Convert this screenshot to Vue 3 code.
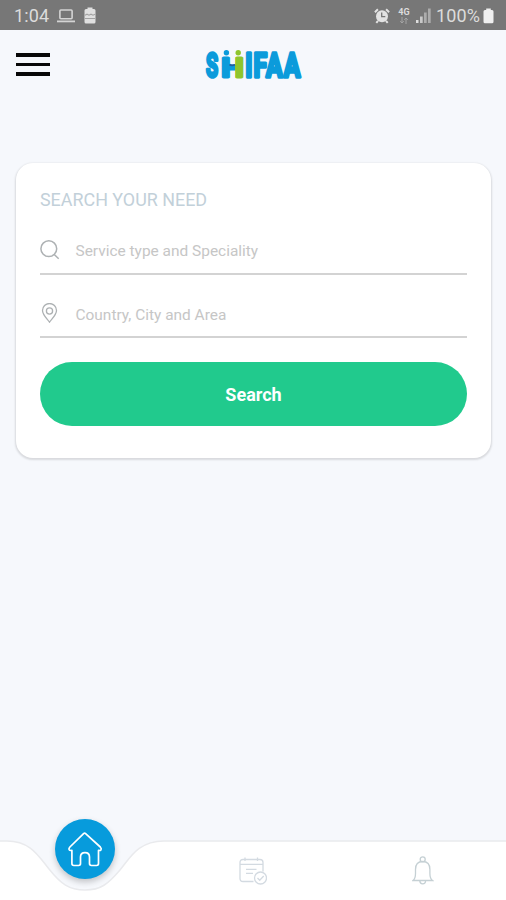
<script setup>
const fields = [
  { icon: 'search', placeholder: 'Service type and Speciality' },
  { icon: 'pin', placeholder: 'Country, City and Area' },
]
</script>

<template>
  <div class="screen">
    <div class="status">
      <span class="time">1:04</span>
      <svg class="laptop" width="18" height="14" viewBox="0 0 18 14">
        <rect x="2.9" y="1" width="12.2" height="8.8" rx="1" fill="none" stroke="#d4d4d4" stroke-width="1.6" />
        <path d="M0 12.4h18" stroke="#d4d4d4" stroke-width="1.8" />
      </svg>
      <svg class="saver" width="12" height="17" viewBox="0 0 12 17">
        <path d="M3.5 2V.5h5V2H10q1.5 0 1.5 1.500V15q0 1.500-1.500 1.500H2Q.5 16.500.5 15V3.500Q.5 2 2 2z" fill="#e0e0e0" />
        <path d="M1 8.200l2-1 2 1 2-1 2 1 2-1M1 11.500h10" fill="none" stroke="#a2a2a2" stroke-width="1.100" />
      </svg>
      <span class="spacer"></span>
      <svg class="alarm" width="16" height="16" viewBox="0 0 16 16">
        <circle cx="8" cy="8.300" r="6" fill="#e2e2e2" />
        <path d="M.9 4.200l3-2.900M15.100 4.200l-3-2.900M4 12.800l-1.700 2M12 12.800l1.700 2" stroke="#e2e2e2" stroke-width="2" />
        <path d="M7.700 4.500v4.200h3.600" fill="none" stroke="#777" stroke-width="1.300" />
      </svg>
      <span class="net">
        <b>4G</b>
        <svg width="10" height="7" viewBox="0 0 10 7">
          <path d="M3 0v6M1.200 4.200L3 6l1.800-1.800M7 7V1M5.200 2.800L7 1l1.800 1.800" fill="none" stroke="#a5a5a5" stroke-width="1" />
        </svg>
      </span>
      <svg class="signal" width="15" height="16" viewBox="0 0 15 16">
        <path d="M0 12h2.500v3H0z" fill="#dedede" />
        <path d="M4 8.500h2.700V15H4z" fill="#c9c9c9" />
        <path d="M8 4.500h2.700V15H8zM12 .5h2.700V15H12z" fill="#acacac" />
      </svg>
      <span class="percent">100%</span>
      <svg class="battery" width="11" height="16" viewBox="0 0 11 16">
        <path d="M3.200 2V.4h4.600V2H9q1.500 0 1.500 1.500v10.300q0 1.500-1.500 1.500H2Q.5 15.300.5 13.800V3.500Q.5 2 2 2z" fill="#efefef" />
      </svg>
    </div>

    <header class="header">
      <button class="menu" aria-label="Menu"><i></i><i></i><i></i></button>
      <svg class="logo" width="100" height="32" viewBox="0 0 100 32">
        <defs>
          <linearGradient id="figures" x1="19" x2="41" y1="0" y2="0" gradientUnits="userSpaceOnUse">
            <stop offset=".6" stop-color="#0b9bdb" />
            <stop offset=".6" stop-color="#8fc52d" />
          </linearGradient>
        </defs>
        <text class="word" y="28.600" fill="#0b9bdb" stroke="#0b9bdb">
          <tspan x="3" textLength="13" lengthAdjust="spacingAndGlyphs">S</tspan><tspan class="h" x="18.500" textLength="22" lengthAdjust="spacingAndGlyphs" fill="url(#figures)" stroke="url(#figures)">H</tspan><tspan x="42.300" textLength="56" lengthAdjust="spacingAndGlyphs">IFAA</tspan>
        </text>
        <circle cx="23.400" cy="4.800" r="2.700" fill="#0b9bdb" />
        <circle cx="35.200" cy="4.800" r="2.700" fill="#8fc52d" />
        <path d="M26.500 16.500q2 1.500 5.500.3" fill="none" stroke="#265c9e" stroke-width="1.600" />
      </svg>
    </header>

    <main class="card">
      <h1>SEARCH YOUR NEED</h1>
      <div v-for="field in fields" :key="field.icon" class="field">
        <svg v-if="field.icon === 'search'" width="20" height="20" viewBox="0 0 20 20">
          <circle cx="8.800" cy="8.700" r="7.900" />
          <path d="M14.200 14.500l4.500 4.200" />
        </svg>
        <svg v-else class="thin" width="20" height="20" viewBox="0 0 20 20">
          <path d="M9.500 19.200C7 15.700 2.500 11.800 2.500 7.500a7 7 0 0 1 14 0c0 4.300-4.500 8.200-7 11.700z" />
          <circle cx="9.500" cy="8" r="3.100" />
        </svg>
        <span>{{ field.placeholder }}</span>
      </div>
      <button class="submit">Search</button>
    </main>

    <nav class="tabs">
      <svg class="shape" width="506" height="65" viewBox="0 0 506 65">
        <path d="M-2 6H7C31 6 39 22 49 34C61 49 69 55 85 55S108 49 120 35C130 23 138 6 164 6H508V67H-2z" fill="#fff" stroke="#e9eaed" stroke-width="1.500" />
      </svg>
      <button class="home" aria-label="Home">
        <svg width="36" height="36" viewBox="0 0 36 36" fill="none" stroke="#fff" stroke-width="1.700" stroke-linejoin="round">
          <path d="M16.600 2.600q1-.9 2 0L33.300 16q1.400 1.500.7 2.700-.7 1.100-2.500.7V32.600q0 1.900-1.900 1.900h-5.200q-1.900 0-1.900-1.900v-6.500q0-4.500-4.500-4.500t-4.500 4.500v6.500q0 1.900-1.900 1.900H6.800q-1.900 0-1.900-1.900V19.400q-2.200.4-2.800-.7-.5-1.200.8-2.700z" />
        </svg>
      </button>
      <svg class="booking" width="28" height="28" viewBox="0 0 28 28" fill="none" stroke="#d3dae1" stroke-width="1.300">
        <path d="M14.500 24.500H4q-3 0-3-3V5.500q0-3 3-3h17q3 0 3 3v9M1 7.300h23M6 .5v3.500M18.500 .5v3.500M7 12.400h10.500M7 16.400h7" />
        <circle cx="21.500" cy="21" r="6" />
        <path d="M18.500 21l2.200 2.200 4-4.200" />
      </svg>
      <svg class="bell" width="22" height="29" viewBox="0 0 22 29" fill="none" stroke="#c5d0d4" stroke-width="1.300">
        <circle cx="10.700" cy="3.300" r="2.500" />
        <path d="M1 24.500q2.500-2 2.500-7v-4q0-8 7.200-8t7.200 8v4q0 5 2.600 7zM7.800 24.800q0 3 2.900 3t2.900-3" />
      </svg>
    </nav>
  </div>
</template>

<style>
body {
  margin: 0;
}
</style>

<style scoped>
.screen {
  display: flex;
  flex-direction: column;
  height: 100vh;
  overflow: hidden;
  background: #f6f8fc;
  font-family: Roboto, sans-serif;
}
svg {
  display: block;
  flex: none;
}
button {
  border: 0;
  padding: 0;
  font-family: inherit;
}
.status {
  display: flex;
  align-items: center;
  box-sizing: border-box;
  height: 30px;
  padding: 1px 12px 0 14px;
  background: #777;
  color: #dcdcdc;
  font-size: 18px;
}
.time {
  width: 35px;
  letter-spacing: 0.1px;
}
.laptop {
  margin-left: 8px;
}
.saver {
  margin-left: 9px;
}
.spacer {
  flex: 1;
}
.net {
  display: flex;
  flex-direction: column;
  align-items: center;
  width: 12px;
  margin: 0 6px 0 8px;
}
.net b {
  font-size: 9px;
  line-height: 9px;
}
.percent {
  width: 45px;
  margin: 0 2px 0 5px;
  letter-spacing: 0.1px;
}
.header {
  display: flex;
  align-items: flex-start;
  height: 118px;
  padding: 18px 16px 0;
  box-sizing: border-box;
}
.menu {
  display: flex;
  flex-direction: column;
  gap: 6px;
  width: 34px;
  margin-top: 5px;
  background: none;
}
.menu i {
  height: 3.500px;
  background: #080808;
}
.logo {
  margin-left: 153px;
  overflow: visible;
}
.word {
  font-family: Roboto, sans-serif;
  font-weight: 700;
  font-size: 33px;
  letter-spacing: 1.500px;
  stroke-width: 3.400;
  stroke-linejoin: round;
}
.word .h {
  font-size: 26px;
  letter-spacing: 0;
  stroke-width: 3;
}
.card {
  box-sizing: border-box;
  height: 295px;
  margin: 15px 15px 0 16px;
  padding: 26px 24px 0;
  background: #fff;
  border-radius: 17px;
  box-shadow: 0 1px 2px 1px rgba(0, 0, 0, 0.12);
}
h1 {
  margin: 0;
  color: #c2d0d9;
  font-size: 17.900px;
  font-weight: 400;
  line-height: 22px;
}
.field {
  display: flex;
  align-items: center;
  gap: 15.500px;
  box-sizing: border-box;
  height: 63.500px;
  padding-top: 16px;
  border-bottom: 2px solid #d3d3d3;
  color: #c6c6c6;
  font-size: 15.450px;
}
.field span {
  padding-top: 3px;
}
.field svg {
  fill: none;
  stroke: #adb1b3;
  stroke-width: 1.500;
}
.field .thin {
  stroke-width: 1.300;
}
.submit {
  display: block;
  width: 100%;
  height: 64px;
  margin-top: 24px;
  border-radius: 32px;
  background: #21ca8d;
  color: #fff;
  font-size: 18px;
  font-weight: 700;
}
.tabs {
  position: relative;
  display: flex;
  align-items: flex-start;
  height: 65px;
  margin-top: auto;
}
.shape {
  position: absolute;
  inset: 0;
}
.home {
  position: absolute;
  left: 55px;
  top: -16px;
  display: grid;
  place-items: center;
  width: 60px;
  height: 60px;
  border-radius: 50%;
  background: #079bdc;
  box-shadow: 0 3px 6px rgba(0, 0, 0, 0.22);
}
.booking {
  position: relative;
  margin: 22px 0 0 239px;
}
.bell {
  position: relative;
  margin: 21px 0 0 145px;
}
</style>
